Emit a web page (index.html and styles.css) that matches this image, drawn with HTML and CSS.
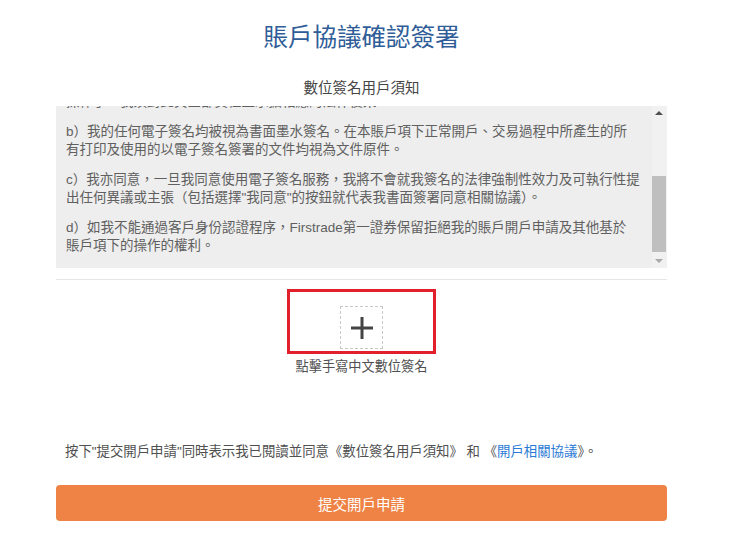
FILE: index.html
```html
<!DOCTYPE html>
<html lang="zh-Hant">
<head>
<meta charset="utf-8">
<title>賬戶協議確認簽署</title>
<link rel="stylesheet" href="styles.css">
</head>
<body>
<main class="page">
  <h1 class="title">賬戶協議確認簽署</h1>
  <h2 class="subtitle">數位簽名用戶須知</h2>

  <section class="notice">
    <div class="notice-view">
      <div class="notice-content">
        <p>a）我同意以電子簽名形式簽署開戶文件及本賬戶項下的各類文件，並同意一切經電子簽名確認的指示及<br>操作了，我須對此負全部責任並承擔相應的法律後果。</p>
        <p>b）我的任何電子簽名均被視為書面墨水簽名。在本賬戶項下正常開戶、交易過程中所產生的所<br>有打印及使用的以電子簽名簽署的文件均視為文件原件。</p>
        <p>c）我亦同意，一旦我同意使用電子簽名服務，我將不會就我簽名的法律強制性效力及可執行性提<br>出任何異議或主張（包括選擇"我同意"的按鈕就代表我書面簽署同意相關協議）。</p>
        <p>d）如我不能通過客戶身份認證程序，Firstrade第一證券保留拒絕我的賬戶開戶申請及其他基於<br>賬戶項下的操作的權利。</p>
      </div>
    </div>
    <div class="scrollbar">
      <div class="sb-btn"><span class="arrow-up"></span></div>
      <div class="sb-track"><div class="sb-thumb"></div></div>
      <div class="sb-btn"><span class="arrow-down"></span></div>
    </div>
  </section>

  <div class="divider"></div>

  <section class="sign">
    <div class="sign-highlight">
      <button class="sign-pad" type="button" aria-label="點擊手寫中文數位簽名">
        <svg width="24" height="24" viewBox="0 0 24 24" aria-hidden="true">
          <path d="M12 1v22M1 12h22" stroke="#444" stroke-width="3" fill="none"/>
        </svg>
      </button>
    </div>
    <div class="sign-caption">點擊手寫中文數位簽名</div>
  </section>

  <p class="agree">按下"提交開戶申請"同時表示我已閱讀並同意《數位簽名用戶須知》 和 《<a href="#" class="link">開戶相關協議</a>》。</p>

  <button class="submit" type="button">提交開戶申請</button>
</main>
</body>
</html>
```

FILE: styles.css
```css
* { box-sizing: border-box; }

body {
  margin: 0;
  background: #ffffff;
  font-family: "Liberation Sans", "Noto Sans CJK TC", sans-serif;
  color: #444;
}

.page {
  width: 611px;
  margin-left: 56px;
  padding-top: 21px;
  display: flex;
  flex-direction: column;
}

.title {
  margin: 0;
  font-size: 24.5px;
  line-height: 34px;
  font-weight: normal;
  color: #2f5d98;
  text-align: center;
}

.subtitle {
  margin: 24px 0 0;
  font-size: 14.5px;
  line-height: 18px;
  font-weight: normal;
  color: #444;
  text-align: center;
}

.notice {
  margin-top: 9px;
  height: 162px;
  display: flex;
  background: #eeeeee;
}

.notice-view {
  flex: 1;
  overflow: hidden;
  padding: 0 6px 0 10px;
}

.notice-content {
  margin-top: -43px;
  padding-top: 12px;
}

.notice-content p {
  margin: 0 0 12px;
  font-size: 13.5px;
  line-height: 18px;
  color: #606060;
  white-space: nowrap;
}

.scrollbar {
  width: 15px;
  display: flex;
  flex-direction: column;
  background: #f1f1f1;
  padding-right: 1px;
}

.sb-btn {
  height: 14px;
  display: flex;
  align-items: center;
  justify-content: center;
}

.arrow-up {
  width: 0;
  height: 0;
  border-left: 4px solid transparent;
  border-right: 4px solid transparent;
  border-bottom: 4px solid #505050;
}

.arrow-down {
  width: 0;
  height: 0;
  border-left: 4px solid transparent;
  border-right: 4px solid transparent;
  border-top: 4px solid #a8a8a8;
}

.sb-track {
  flex: 1;
  display: flex;
  flex-direction: column;
  justify-content: flex-end;
}

.sb-thumb {
  height: 76px;
  margin-bottom: 2px;
  background: #bfbfbf;
}

.divider {
  margin-top: 11px;
  height: 1px;
  background: #e6e6e6;
}

.sign {
  display: flex;
  flex-direction: column;
  align-items: center;
  margin-top: 9px;
}

.sign-highlight {
  width: 149px;
  height: 65px;
  border: 3px solid #e2202b;
  padding-top: 14px;
  display: flex;
  justify-content: center;
  align-items: flex-start;
}

.sign-pad {
  width: 43px;
  height: 43px;
  margin: 0;
  padding: 0;
  border: 1px dashed #c8c8c8;
  background: #ffffff;
  display: flex;
  align-items: center;
  justify-content: center;
  cursor: pointer;
}

.sign-caption {
  margin-top: 4px;
  font-size: 13.2px;
  line-height: 18px;
  color: #505050;
}

.agree {
  margin: 66px 0 0 9px;
  font-size: 13.4px;
  line-height: 20px;
  color: #505050;
}

.link {
  color: #2b7bd6;
  text-decoration: none;
}

.submit {
  margin-top: 23px;
  height: 36px;
  border: none;
  border-radius: 4px;
  background: #ee8345;
  color: #ffffff;
  font-family: "Liberation Sans", "Noto Sans CJK TC", sans-serif;
  font-size: 14.5px;
  cursor: pointer;
}
```
